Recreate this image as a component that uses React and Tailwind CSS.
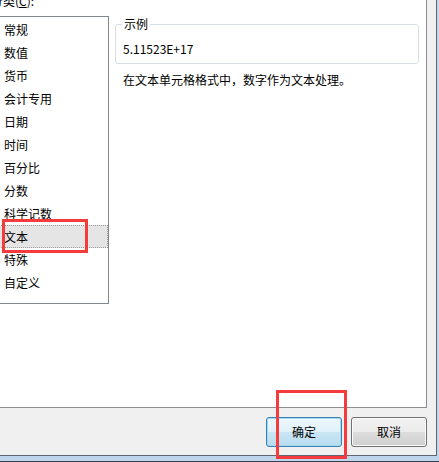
import React from "react";

const categories = [
  "常规",
  "数值",
  "货币",
  "会计专用",
  "日期",
  "时间",
  "百分比",
  "分数",
  "科学记数",
  "文本",
  "特殊",
  "自定义",
];

const font = "font-['Noto_Sans_CJK_SC','Liberation_Sans',sans-serif]";

function CategoryList({ selected }) {
  return (
    <div className="-ml-[2px] w-[111px] h-[288px] shrink-0 border border-[#828790] bg-white pt-[1px]">
      {categories.map((c) =>
        c === selected ? (
          <div
            key={c}
            className="h-[23px] leading-[21px] pl-[4px] bg-[#e5e5e5] border border-dotted border-[#9a9a9a] whitespace-nowrap"
          >
            {c}
          </div>
        ) : (
          <div key={c} className="h-[23px] leading-[23px] pl-[5px] whitespace-nowrap">
            {c}
          </div>
        ),
      )}
    </div>
  );
}

function DialogButton({ children, primary }) {
  return (
    <button
      className={
        primary
          ? "w-[76px] h-[30px] rounded-[3px] border border-[#3c7fb1] bg-[linear-gradient(180deg,#eef7fc_0%,#e0f1fa_50%,#c9e6f4_50%,#b9dcee_100%)] shadow-[inset_0_0_0_1px_#9fdcf8] text-[12px] leading-[28px]"
          : "w-[76px] h-[30px] rounded-[3px] border border-[#707070] bg-[linear-gradient(180deg,#f2f2f2_0%,#ebebeb_50%,#dddddd_50%,#cfcfcf_100%)] shadow-[inset_0_0_0_1px_#fbfbfb] text-[12px] leading-[28px]"
      }
    >
      {children}
    </button>
  );
}

export default function App() {
  return (
    <div className={`relative w-[439px] h-[462px] overflow-hidden bg-[#bfd7ee] text-[12px] text-black ${font}`}>
      <div className="w-[437px] h-[456px] bg-[#f0f0f0] border-r border-b border-[#60666b] flex flex-col">
        <div className="w-[427px] h-[408px] shrink-0 bg-white border-r border-b border-[#8c8e94] flex flex-col">
          <div className="-mt-[7px] -ml-[9px] h-[16px] leading-[16px] whitespace-nowrap">
            分类(<span className="underline">C</span>):
          </div>
          <div className="mt-[7px] flex items-start">
            <CategoryList selected="文本" />
            <div className="ml-[6px] flex flex-col">
              <fieldset className="w-[304px] border border-[#d5dfe5] rounded-[3px] pl-[6px] pt-[9px] pb-[6px]">
                <legend className="px-[2px] leading-[16px]">示例</legend>
                <div className="ml-[1px] leading-[16px]">5.11523E+17</div>
              </fieldset>
              <div className="mt-[8px] ml-[8px] leading-[16px] whitespace-nowrap">
                在文本单元格格式中，数字作为文本处理。
              </div>
            </div>
          </div>
        </div>
        <div className="mt-[9px] pr-[9px] flex justify-end gap-[9px]">
          <DialogButton primary>确定</DialogButton>
          <DialogButton>取消</DialogButton>
        </div>
      </div>
      <div className="mt-[5px] h-[1px] bg-[#34404b]" />

      {/* annotation boxes */}
      <div className="absolute left-[2px] top-[219px] w-[86px] h-[34px] border-[3px] border-[#f53b3b]" />
      <div className="absolute left-[276px] top-[390px] w-[71px] h-[69px] border-[3px] border-[#f53b3b]" />
    </div>
  );
}
